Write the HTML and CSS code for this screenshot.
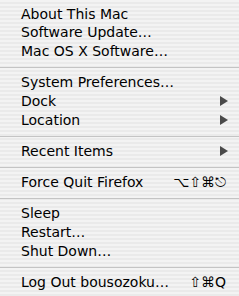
FILE: index.html
```html
<!DOCTYPE html>
<html>
<head>
<meta charset="utf-8">
<link rel="stylesheet" href="styles.css">
</head>
<body>
<div class="menu">
  <div class="item"><span class="label">About This Mac</span></div>
  <div class="item"><span class="label">Software Update…</span></div>
  <div class="item"><span class="label">Mac OS X Software…</span></div>
  <div class="sep"></div>
  <div class="item"><span class="label">System Preferences…</span></div>
  <div class="item"><span class="label">Dock</span><span class="arrow"></span></div>
  <div class="item"><span class="label">Location</span><span class="arrow"></span></div>
  <div class="sep"></div>
  <div class="item"><span class="label">Recent Items</span><span class="arrow"></span></div>
  <div class="sep"></div>
  <div class="item"><span class="label">Force Quit Firefox</span><span class="key">⌥⇧⌘⎋</span></div>
  <div class="sep"></div>
  <div class="item"><span class="label">Sleep</span></div>
  <div class="item"><span class="label">Restart…</span></div>
  <div class="item"><span class="label">Shut Down…</span></div>
  <div class="sep"></div>
  <div class="item"><span class="label">Log Out bousozoku…</span><span class="key">⇧⌘Q</span></div>
</div>
</body>
</html>
```
FILE: styles.css
```css
html, body {
  margin: 0;
  padding: 0;
  background: #f0f0f0;
}
.menu {
  width: 239px;
  height: 296px;
  box-sizing: border-box;
  padding-top: 4.6px;
  background: repeating-linear-gradient(to bottom, #f3f3f3 0, #f3f3f3 2px, #eaeaea 2px, #eaeaea 4px);
  font-family: "DejaVu Sans", sans-serif;
  font-size: 14px;
  color: #000;
}
.item {
  display: flex;
  align-items: center;
  height: 18.75px;
  line-height: 18.75px;
  padding: 0 11px 0 21px;
  white-space: nowrap;
}
.label {
  flex: 1;
}
.key {
  padding-right: 2px;
}
.arrow {
  width: 0;
  height: 0;
  border-top: 5px solid transparent;
  border-bottom: 5px solid transparent;
  border-left: 8px solid #4a4a4a;
  margin-top: -1px;
}
.sep {
  height: 1px;
  margin: 6.4px 0 5px;
  background: #c4c4c4;
}
```
